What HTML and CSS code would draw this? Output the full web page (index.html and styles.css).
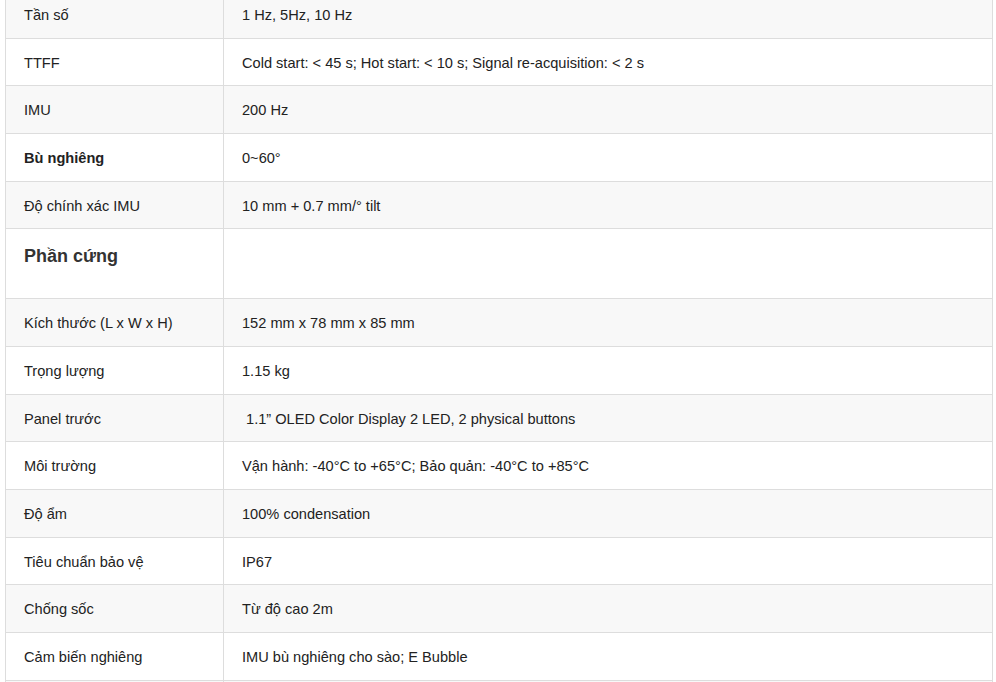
FILE: index.html
```html
<!DOCTYPE html>
<html lang="vi">
<head>
<meta charset="utf-8">
<link rel="stylesheet" href="styles.css">
</head>
<body>
<div class="wrap">
<table class="spec">
<tbody>
<tr><td class="k">Tần số</td><td>1 Hz, 5Hz, 10 Hz</td></tr>
<tr><td class="k">TTFF</td><td>Cold start: &lt; 45 s; Hot start: &lt; 10 s; Signal re-acquisition: &lt; 2 s</td></tr>
<tr><td class="k">IMU</td><td>200 Hz</td></tr>
<tr><td class="k"><strong>Bù nghiêng</strong></td><td>0~60°</td></tr>
<tr><td class="k">Độ chính xác IMU</td><td>10 mm + 0.7 mm/° tilt</td></tr>
<tr><td class="k"><h4 class="section">Phần cứng</h4></td><td></td></tr>
<tr><td class="k">Kích thước (L x W x H)</td><td>152 mm x 78 mm x 85 mm</td></tr>
<tr><td class="k">Trọng lượng</td><td>1.15 kg</td></tr>
<tr><td class="k">Panel trước</td><td>&nbsp;1.1” OLED Color Display 2 LED, 2 physical buttons</td></tr>
<tr><td class="k">Môi trường</td><td>Vận hành: -40°C to +65°C; Bảo quản: -40°C to +85°C</td></tr>
<tr><td class="k">Độ ẩm</td><td>100% condensation</td></tr>
<tr><td class="k">Tiêu chuẩn bảo vệ</td><td>IP67</td></tr>
<tr><td class="k">Chống sốc</td><td>Từ độ cao 2m</td></tr>
<tr><td class="k">Cảm biến nghiêng</td><td>IMU bù nghiêng cho sào; E Bubble</td></tr>
<tr><td class="k">&nbsp;</td><td>&nbsp;</td></tr>
</tbody>
</table>
</div>
</body>
</html>
```
FILE: styles.css
```css
html, body {
  margin: 0;
  padding: 0;
  background: #fff;
}
.wrap {
  padding-left: 5px;
  margin-top: -10px;
}
.spec {
  border-collapse: collapse;
  width: 988px;
  font-family: "Liberation Sans", Arial, sans-serif;
  font-size: 14.6px;
  color: #222;
}
.spec td {
  border: 1px solid #dddddd;
  padding: 14px 17px 12px 18px;
  line-height: 20.67px;
  vertical-align: top;
  text-align: left;
}
.spec td.k {
  width: 182px;
}
.spec tr:nth-child(odd) td {
  background: #f8f8f8;
}
.spec strong {
  font-weight: bold;
}
.section {
  margin: 1px 0 18px 0;
  font-size: 18px;
  line-height: 24px;
  font-weight: bold;
  color: #333;
}
```
